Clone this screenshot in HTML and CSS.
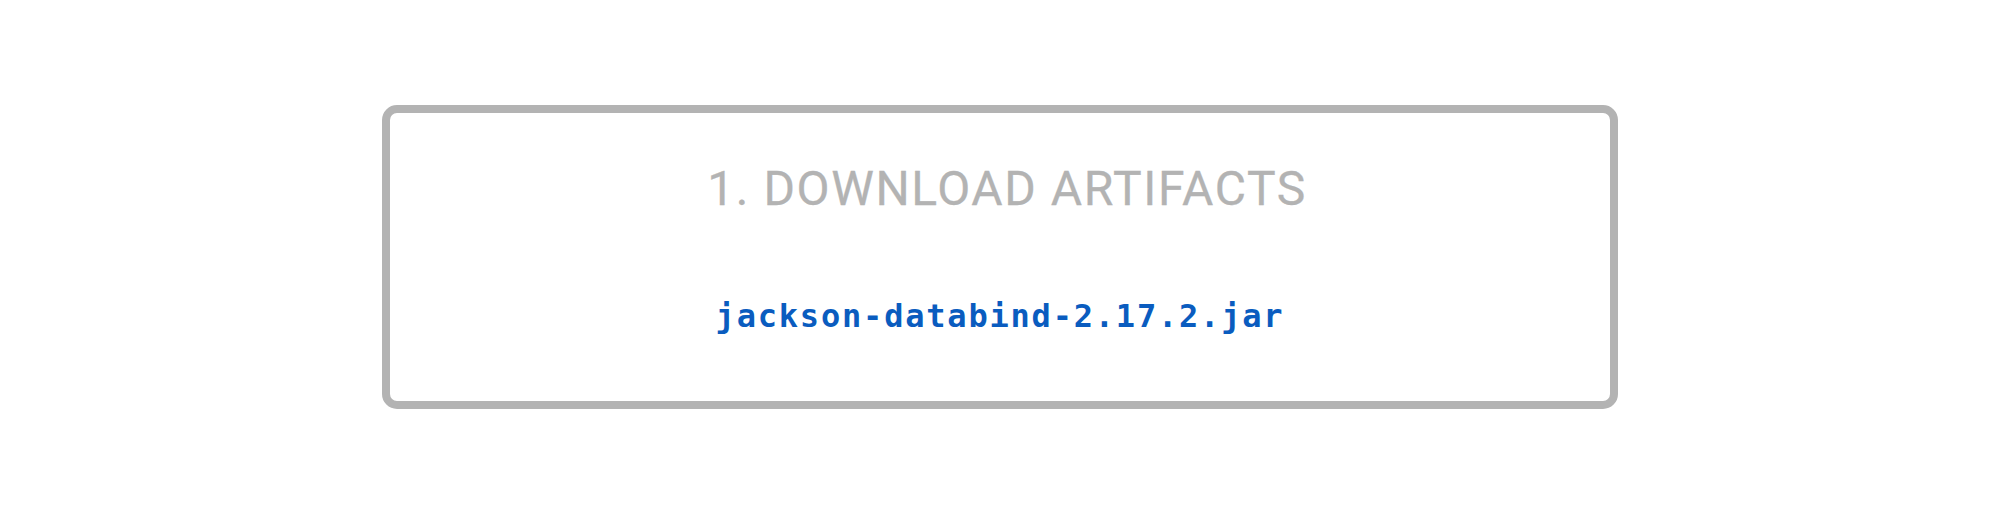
FILE: index.html
```html
<!DOCTYPE html>
<html lang="en">
<head>
<meta charset="utf-8">
<title>Download artifacts</title>
<link rel="stylesheet" href="styles.css">
</head>
<body>
<main class="page">
  <section class="card">
    <h2 class="card-title">1. DOWNLOAD ARTIFACTS</h2>
    <div class="artifact">jackson-databind-2.17.2.jar</div>
  </section>
</main>
</body>
</html>
```

FILE: styles.css
```css
html, body {
  margin: 0;
  padding: 0;
  background: #ffffff;
}

.page {
  width: 2000px;
  height: 514px;
  display: flex;
  align-items: center;
  justify-content: center;
}

.card {
  box-sizing: border-box;
  width: 1236px;
  height: 304px;
  border: 8px solid #b3b3b3;
  border-radius: 15px;
  display: flex;
  flex-direction: column;
  align-items: center;
  padding-top: 47px;
  gap: 79px;
}

.card-title {
  margin: 0;
  font-family: Roboto, "Liberation Sans", sans-serif;
  font-weight: 400;
  font-size: 48px;
  line-height: 58px;
  letter-spacing: 1.6px;
  padding-left: 14px;
  color: #b3b3b3;
  -webkit-text-stroke: 0.3px #b3b3b3;
}

.artifact {
  font-family: "DejaVu Sans Mono", "Liberation Mono", monospace;
  font-weight: 700;
  font-size: 32px;
  line-height: 38px;
  letter-spacing: 1.8px;
  color: #0a5cbf;
}
```
